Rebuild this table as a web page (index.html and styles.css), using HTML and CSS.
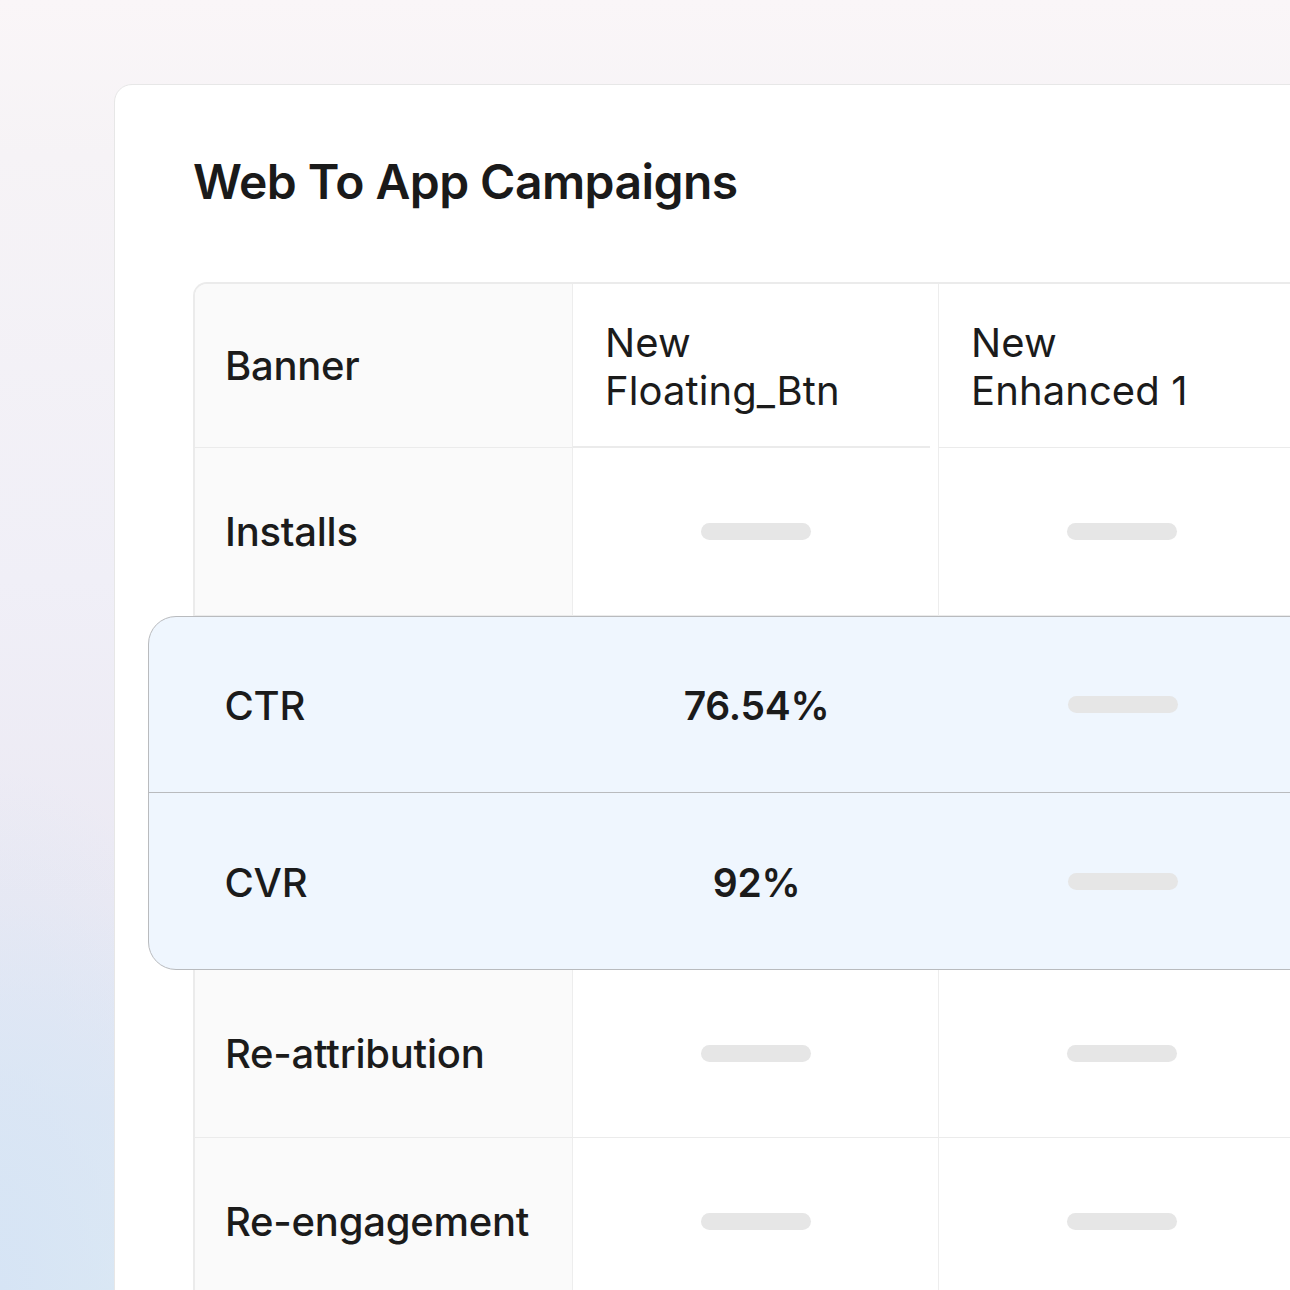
FILE: index.html
```html
<!DOCTYPE html>
<html lang="en">
<head>
<meta charset="utf-8">
<title>Web To App Campaigns</title>
<link rel="stylesheet" href="styles.css">
</head>
<body>
<div class="page">
  <section class="card">
    <h1 class="title">Web To App Campaigns</h1>
    <div class="table">
      <div class="row head">
        <div class="cell label">Banner</div>
        <div class="cell th th-mid">New<br>Floating_Btn</div>
        <div class="cell th">New<br>Enhanced 1</div>
        <div class="cell th"></div>
      </div>
      <div class="row">
        <div class="cell label">Installs</div>
        <div class="cell val"><span class="pill"></span></div>
        <div class="cell val"><span class="pill"></span></div>
        <div class="cell val"></div>
      </div>
      <div class="highlight">
        <div class="row hrow first">
          <div class="cell label">CTR</div>
          <div class="cell val num">76.54%</div>
          <div class="cell val"><span class="pill"></span></div>
          <div class="cell val"></div>
        </div>
        <div class="row hrow">
          <div class="cell label">CVR</div>
          <div class="cell val num">92%</div>
          <div class="cell val"><span class="pill"></span></div>
          <div class="cell val"></div>
        </div>
      </div>
      <div class="row">
        <div class="cell label">Re-attribution</div>
        <div class="cell val"><span class="pill"></span></div>
        <div class="cell val"><span class="pill"></span></div>
        <div class="cell val"></div>
      </div>
      <div class="row">
        <div class="cell label">Re-engagement</div>
        <div class="cell val"><span class="pill"></span></div>
        <div class="cell val"><span class="pill"></span></div>
        <div class="cell val"></div>
      </div>
    </div>
  </section>
</div>
</body>
</html>
```

FILE: styles.css
```css
* { box-sizing: border-box; }
html, body { margin: 0; padding: 0; }
body {
  font-family: Inter, "Noto Sans", sans-serif;
  color: #1b1b1b;
}
.page {
  width: 1290px;
  height: 1290px;
  overflow: hidden;
  padding: 84px 0 0 114px;
  background:
    radial-gradient(ellipse 260px 520px at 0% 100%, rgba(214,228,245,1) 0%, rgba(216,230,245,0.6) 45%, rgba(216,230,245,0) 100%),
    linear-gradient(180deg, #faf6f8 0%, #f6f3f6 12%, #f0eff7 45%, #ebe9f3 70%, #dfe6f4 86%, #dbe8f2 100%);
}
.card {
  width: 1400px;
  height: 1400px;
  background: #fff;
  border: 1.5px solid #e7e7e7;
  border-radius: 18px 0 0 0;
  padding: 68px 0 0 78px;
}
.title {
  margin: 0 0 71px 0;
  font-size: 48px;
  line-height: 58px;
  font-weight: 600;
  letter-spacing: -0.55px;
  color: #1a1a1a;
}
.table {
  width: 1300px;
  border-top: 2px solid #ebebeb;
  border-left: 2px solid #ebebeb;
  border-radius: 14px 0 0 0;
}
.row {
  display: grid;
  grid-template-columns: 378px 366px 366px 366px;
  height: 168px;
}
.row.head { height: 164px; }
.cell {
  border-right: 1.5px solid #ededed;
  border-bottom: 1.5px solid #ebebeb;
  display: flex;
  align-items: center;
  font-size: 40px;
  line-height: 48px;
}
.label {
  background: #fafafa;
  padding-left: 30px;
  font-weight: 500;
  letter-spacing: -0.25px;
}
.head .label { border-top-left-radius: 12px; }
.th {
  padding-left: 32px;
  font-weight: 400;
  padding-top: 2px;
  letter-spacing: 0.1px;
}
.th-mid {
  border-bottom: none;
  background-image: linear-gradient(#ebebeb, #ebebeb);
  background-size: calc(100% - 8px) 2px;
  background-position: left bottom;
  background-repeat: no-repeat;
}
.val { justify-content: center; }
.num {
  font-weight: 600;
  font-size: 39px;
  letter-spacing: -0.3px;
}
.pill {
  display: block;
  width: 110px;
  height: 17px;
  border-radius: 9px;
  background: #e6e6e6;
}
.highlight {
  margin-left: -47px;
  width: 1400px;
  background: #eff6fe;
  border: 1.6px solid #b9bbbe;
  border-radius: 28px 0 0 28px;
  padding-left: 45.5px;
}
.hrow { height: 176px; }
.hrow .cell {
  border-right: none;
  border-bottom: none;
  background: transparent;
}
.hrow .label,
.hrow .num { padding-top: 3px; }
.hrow .label { font-weight: 550; }
.hrow .num { padding-left: 2px; }
.hrow .pill { margin-left: 2px; }
.hrow.first {
  border-bottom: 1.6px solid #b9bbbe;
  margin-left: -45.5px;
  padding-left: 45.5px;
  width: calc(100% + 45.5px);
}
```
